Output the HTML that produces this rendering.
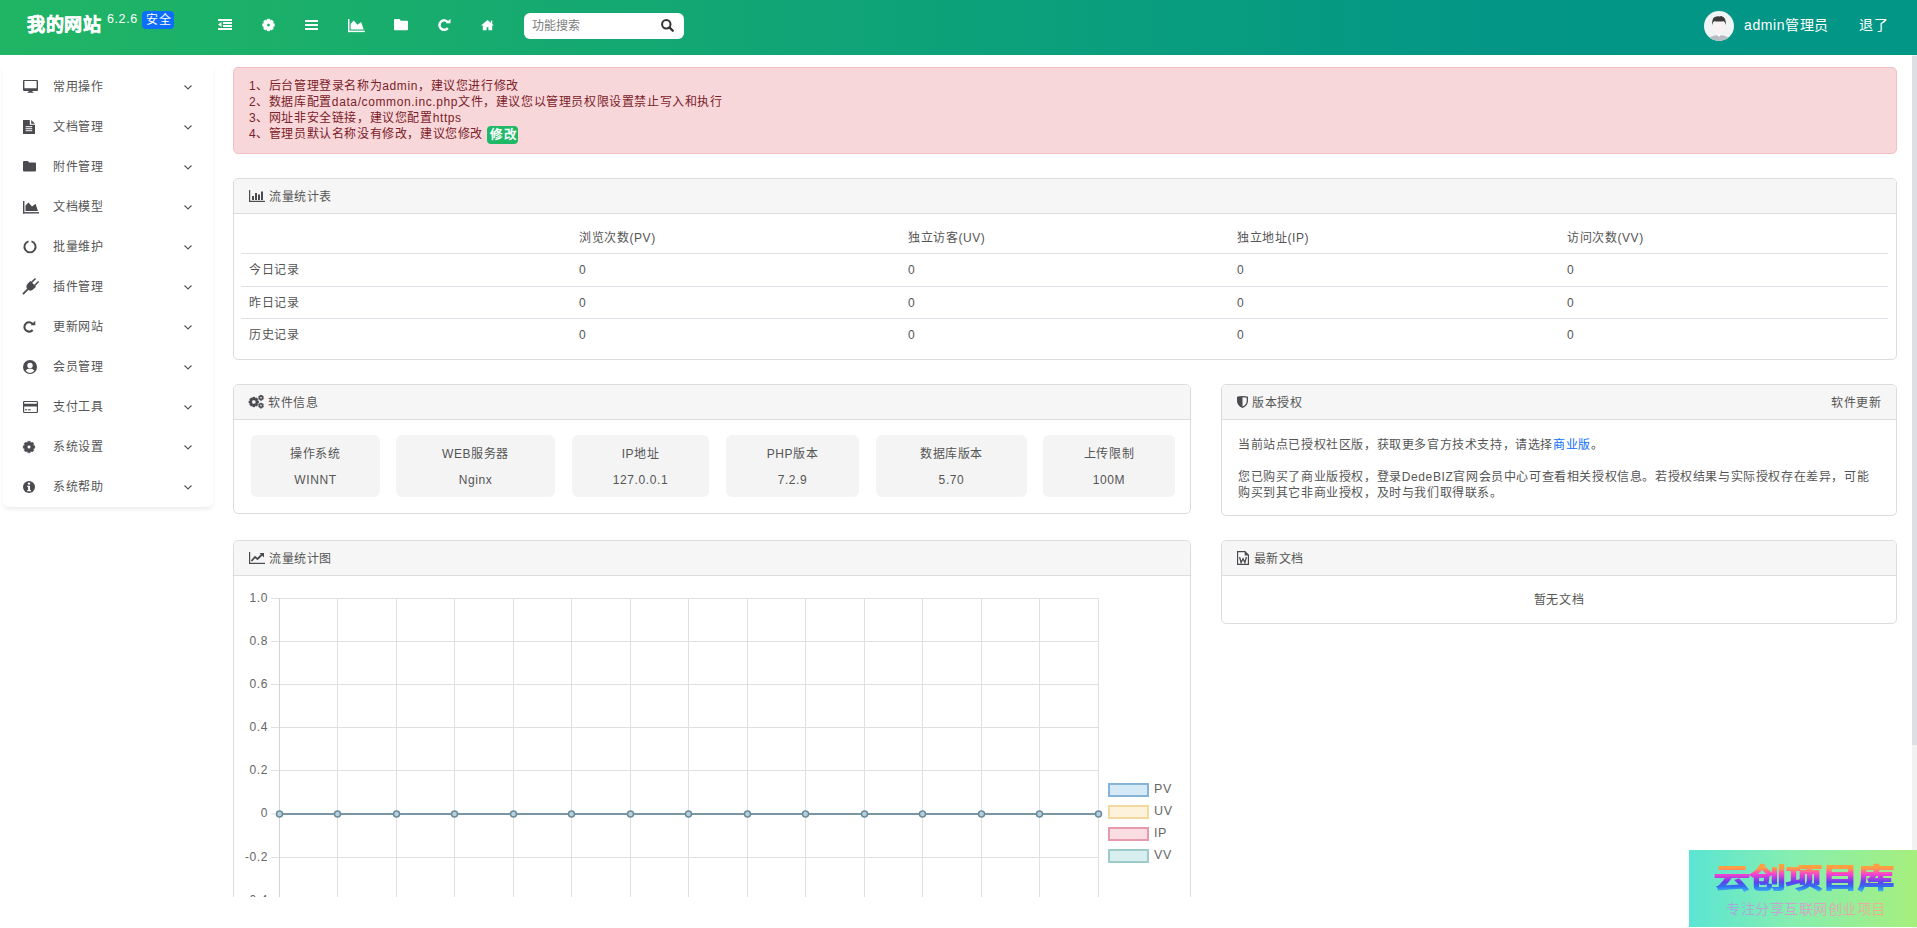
<!DOCTYPE html><html lang="zh-CN"><head><meta charset="utf-8"><title>DedeBIZ</title><style>
*{box-sizing:border-box;margin:0;padding:0}
html,body{width:1917px;height:928px;overflow:hidden;background:#fff}
body{text-autospace:no-autospace;text-spacing-trim:space-all;position:relative;font-family:"Liberation Sans",sans-serif;font-size:12px;letter-spacing:.6px;color:#555}
.abs{position:absolute}
.t{position:absolute;white-space:nowrap;line-height:16px}
.hdr{position:absolute;left:0;top:0;width:1917px;height:55px;background:linear-gradient(90deg,#20b564 0%,#039686 78%,#029686 100%)}
.card{position:absolute;border:1px solid #dcdcdc;border-radius:5px;background:#fff;overflow:hidden}
.ch{position:absolute;left:0;top:0;right:0;height:35px;background:#f6f6f6;border-bottom:1px solid #dcdcdc}
svg{position:absolute;overflow:visible}

</style></head><body>
<div class="hdr">
<div class="t" style="left:27px;top:15px;line-height:20px;font-size:18px;font-weight:900;color:#fff;letter-spacing:.5px;-webkit-text-stroke:.5px #fff">我的网站</div>
<div class="t" style="left:107px;top:12px;line-height:14px;font-size:12.5px;color:#fff">6.2.6</div>
<div class="abs" style="left:142px;top:11px;width:32px;height:18px;background:#0d6efd;border-radius:4px"></div>
<div class="t" style="left:146px;top:12px;line-height:16px;font-size:12px;color:#fff">安全</div>
<svg style="left:218px;top:19px" width="14" height="11" viewBox="0 0 14 11"><rect x="0" y="0" width="14" height="2" fill="#fff"/><rect x="5" y="3" width="9" height="2" fill="#fff"/><rect x="5" y="6" width="9" height="2" fill="#fff"/><rect x="0" y="9" width="14" height="2" fill="#fff"/><path d="M0 5.5 L3.5 3 L3.5 8 Z" fill="#fff"/></svg>
<svg style="left:0;top:0" width="1" height="1"><path d="M266.77 20.41 L267.21 18.94 L269.79 18.94 L270.23 20.41 L270.52 20.54 L271.87 19.80 L273.70 21.63 L272.96 22.98 L273.09 23.27 L274.56 23.71 L274.56 26.29 L273.09 26.73 L272.96 27.02 L273.70 28.37 L271.87 30.20 L270.52 29.46 L270.23 29.59 L269.79 31.06 L267.21 31.06 L266.77 29.59 L266.48 29.46 L265.13 30.20 L263.30 28.37 L264.04 27.02 L263.91 26.73 L262.44 26.29 L262.44 23.71 L263.91 23.27 L264.04 22.98 L263.30 21.63 L265.13 19.80 L266.48 20.54 Z M270.10 25.00 A1.6 1.6 0 1 0 266.90 25.00 A1.6 1.6 0 1 0 270.10 25.00 Z" fill="#fff" fill-rule="evenodd" stroke="#fff" stroke-width="0.3" stroke-linejoin="round" /></svg>
<svg style="left:305px;top:20px" width="13" height="10" viewBox="0 0 13 10"><rect x="0" y="0" width="13" height="2" fill="#fff"/><rect x="0" y="4" width="13" height="2" fill="#fff"/><rect x="0" y="8" width="13" height="2" fill="#fff"/></svg>
<svg style="left:347.5px;top:18.6px" width="16.8" height="13.125" viewBox="0 0 16 12.5"><rect x="0" y="0" width="1.4" height="12.5" fill="#fff"/><rect x="0" y="11.1" width="16" height="1.4" fill="#fff"/><path d="M2.5 10 L2.5 4.5 L5.5 1.5 L9 5.5 L11 4 L12.5 2.8 L15 10 Z" fill="#fff"/></svg>
<svg style="left:394px;top:19px" width="14" height="11.2" viewBox="0 0 14 11.2"><path d="M1 0 H5.5 L6.8 1.8 H13 Q14 1.8 14 2.8 V10.2 Q14 11.2 13 11.2 H1 Q0 11.2 0 10.2 V1 Q0 0 1 0 Z" fill="#fff"/></svg>
<svg style="left:437.8px;top:18.9px" width="13.0" height="13.0"><path d="M9.94 3.18 A4.75 4.75 0 1 0 9.84 9.15" fill="none" stroke="#fff" stroke-width="2.50"/><path d="M7.80 4.30 L12.50 4.30 L12.50 -0.30 Z" fill="#fff"/></svg>
<svg style="left:481px;top:19.8px" width="13" height="10.2" viewBox="0 0 13 10.2"><path d="M6.5 0 L13 5.4 H11.2 V10.2 H7.4 V7.2 H5.6 V10.2 H1.8 V5.4 H0 Z" fill="#fff"/><rect x="9.8" y="0.6" width="1.5" height="3.6" fill="#fff"/></svg>
<div class="abs" style="left:524px;top:13px;width:160px;height:26px;background:#fff;border-radius:6px"></div>
<div class="t" style="left:532px;top:17px;line-height:18px;font-size:12px;letter-spacing:0;color:#808080">功能搜索</div>
<svg style="left:660.5px;top:19px" width="13" height="13" viewBox="0 0 13 13"><circle cx="5.3" cy="5.3" r="4.2" fill="none" stroke="#333" stroke-width="2"/><path d="M8.4 8.4 L11.8 11.8" stroke="#333" stroke-width="2.3" stroke-linecap="round"/></svg>
<svg style="left:1704px;top:11px" width="30" height="30" viewBox="0 0 30 30">
<circle cx="15" cy="15" r="15" fill="#f0f4f5"/>
<clipPath id="avc"><circle cx="15" cy="15" r="15"/></clipPath>
<g clip-path="url(#avc)">
<ellipse cx="15" cy="31" rx="12" ry="7" fill="#b9bcc2"/>
<path d="M12.5 23 L15 26 L17.5 23 Z" fill="#fff"/>
<ellipse cx="15" cy="15.5" rx="6" ry="7.5" fill="#f8f2f4"/>
<path transform="translate(0,-1.6)" d="M8.2 15.8 Q7.8 8.5 11 7.6 Q13 6.4 15.5 7 Q17.5 6 18.3 7.2 Q22.2 8.5 21.8 15.8 Q21 12.5 19.8 11.8 Q15 12.6 10.2 11.8 Q9 12.5 8.2 15.8 Z" fill="#3a3a3a"/>
</g></svg>
<div class="t" style="left:1744px;top:17px;line-height:16px;font-size:14px;color:#fff">admin管理员</div>
<div class="t" style="left:1859px;top:17px;line-height:16px;font-size:14px;color:#fff">退了</div>
</div>
<div class="abs" style="left:1912px;top:55px;width:5px;height:873px;background:#f1f1f1"></div>
<div class="abs" style="left:1912px;top:56px;width:5px;height:689px;background:#dcdfe3"></div>
<div class="abs" style="left:3px;top:64px;width:210px;height:443px;background:#fff;border-radius:6px;box-shadow:0 3px 5px -1px rgba(0,0,0,.09)"></div>
<div class="t" style="left:53px;top:79px;line-height:16px;color:#555">常用操作</div>
<svg style="left:184px;top:84.5px" width="8" height="5" viewBox="0 0 8 5"><path d="M0.5 0.5 L4 4 L7.5 0.5" fill="none" stroke="#555" stroke-width="1.1"/></svg>
<div class="t" style="left:53px;top:119px;line-height:16px;color:#555">文档管理</div>
<svg style="left:184px;top:124.5px" width="8" height="5" viewBox="0 0 8 5"><path d="M0.5 0.5 L4 4 L7.5 0.5" fill="none" stroke="#555" stroke-width="1.1"/></svg>
<div class="t" style="left:53px;top:159px;line-height:16px;color:#555">附件管理</div>
<svg style="left:184px;top:164.5px" width="8" height="5" viewBox="0 0 8 5"><path d="M0.5 0.5 L4 4 L7.5 0.5" fill="none" stroke="#555" stroke-width="1.1"/></svg>
<div class="t" style="left:53px;top:199px;line-height:16px;color:#555">文档模型</div>
<svg style="left:184px;top:204.5px" width="8" height="5" viewBox="0 0 8 5"><path d="M0.5 0.5 L4 4 L7.5 0.5" fill="none" stroke="#555" stroke-width="1.1"/></svg>
<div class="t" style="left:53px;top:239px;line-height:16px;color:#555">批量维护</div>
<svg style="left:184px;top:244.5px" width="8" height="5" viewBox="0 0 8 5"><path d="M0.5 0.5 L4 4 L7.5 0.5" fill="none" stroke="#555" stroke-width="1.1"/></svg>
<div class="t" style="left:53px;top:279px;line-height:16px;color:#555">插件管理</div>
<svg style="left:184px;top:284.5px" width="8" height="5" viewBox="0 0 8 5"><path d="M0.5 0.5 L4 4 L7.5 0.5" fill="none" stroke="#555" stroke-width="1.1"/></svg>
<div class="t" style="left:53px;top:319px;line-height:16px;color:#555">更新网站</div>
<svg style="left:184px;top:324.5px" width="8" height="5" viewBox="0 0 8 5"><path d="M0.5 0.5 L4 4 L7.5 0.5" fill="none" stroke="#555" stroke-width="1.1"/></svg>
<div class="t" style="left:53px;top:359px;line-height:16px;color:#555">会员管理</div>
<svg style="left:184px;top:364.5px" width="8" height="5" viewBox="0 0 8 5"><path d="M0.5 0.5 L4 4 L7.5 0.5" fill="none" stroke="#555" stroke-width="1.1"/></svg>
<div class="t" style="left:53px;top:399px;line-height:16px;color:#555">支付工具</div>
<svg style="left:184px;top:404.5px" width="8" height="5" viewBox="0 0 8 5"><path d="M0.5 0.5 L4 4 L7.5 0.5" fill="none" stroke="#555" stroke-width="1.1"/></svg>
<div class="t" style="left:53px;top:439px;line-height:16px;color:#555">系统设置</div>
<svg style="left:184px;top:444.5px" width="8" height="5" viewBox="0 0 8 5"><path d="M0.5 0.5 L4 4 L7.5 0.5" fill="none" stroke="#555" stroke-width="1.1"/></svg>
<div class="t" style="left:53px;top:479px;line-height:16px;color:#555">系统帮助</div>
<svg style="left:184px;top:484.5px" width="8" height="5" viewBox="0 0 8 5"><path d="M0.5 0.5 L4 4 L7.5 0.5" fill="none" stroke="#555" stroke-width="1.1"/></svg>
<svg style="left:23px;top:80px" width="15" height="13" viewBox="0 0 15 13"><path d="M1 0 H14 Q15 0 15 1 V10 Q15 11 14 11 H9.5 V12 H10.5 V12.8 H4.5 V12 H5.5 V11 H1 Q0 11 0 10 V1 Q0 0 1 0 Z M1.4 1 V8.2 H13.6 V1 Z" fill="#4a4a4f" fill-rule="evenodd"/></svg>
<svg style="left:23px;top:120px" width="12" height="14" viewBox="0 0 12 14"><path d="M0 0 H6.8 V4.8 H12 V14 H0 Z M8.2 0 L12 3.8 H8.2 Z" fill="#4a4a4f"/><rect x="2.6" y="6.2" width="6.6" height="1" fill="#fff"/><rect x="2.6" y="8.2" width="6.6" height="1" fill="#fff"/><rect x="2.6" y="10.2" width="6.6" height="1" fill="#fff"/></svg>
<svg style="left:23px;top:161px" width="13" height="10.5" viewBox="0 0 13 10.5"><path d="M1 0 H5 L6 1.6 H12 Q13 1.6 13 2.6 V9.5 Q13 10.5 12 10.5 H1 Q0 10.5 0 9.5 V1 Q0 0 1 0 Z" fill="#4a4a4f"/></svg>
<svg style="left:23px;top:201px" width="16.0" height="12.5" viewBox="0 0 16 12.5"><rect x="0" y="0" width="1.4" height="12.5" fill="#4a4a4f"/><rect x="0" y="11.1" width="16" height="1.4" fill="#4a4a4f"/><path d="M2.5 10 L2.5 4.5 L5.5 1.5 L9 5.5 L11 4 L12.5 2.8 L15 10 Z" fill="#4a4a4f"/></svg>
<svg style="left:23px;top:240px" width="14" height="14" viewBox="0 0 14 14"><path d="M5.5 1.4 A5.6 5.6 0 1 0 8.5 1.4" fill="none" stroke="#4a4a4f" stroke-width="1.9"/></svg>
<svg style="left:0;top:0" width="1" height="1"><g transform="translate(30,287) rotate(45)"><rect x="-2.9" y="-10" width="1.5" height="6" fill="#4a4a4f"/><rect x="1.4" y="-10" width="1.5" height="6" fill="#4a4a4f"/><path d="M-4 -4.5 H4 V-1 Q4 3 0 3.5 Q-4 3 -4 -1 Z" fill="#4a4a4f"/><rect x="-0.9" y="3" width="1.8" height="7" fill="#4a4a4f"/></g></svg>
<svg style="left:22.9px;top:320.8px" width="12.74" height="12.74"><path d="M9.74 3.11 A4.66 4.66 0 1 0 9.64 8.97" fill="none" stroke="#4a4a4f" stroke-width="2.06"/><path d="M7.64 4.21 L12.25 4.21 L12.25 -0.29 Z" fill="#4a4a4f"/></svg>
<svg style="left:23px;top:360px" width="14" height="14" viewBox="0 0 14 14"><circle cx="7" cy="7" r="7" fill="#4a4a4f"/><circle cx="7" cy="5.4" r="2.7" fill="#fff"/><path d="M2.6 10.6 Q4.5 8.6 7 8.6 Q9.5 8.6 11.4 10.6 A5.3 5.3 0 0 1 2.6 10.6 Z" fill="#fff"/></svg>
<svg style="left:23px;top:401px" width="15" height="12" viewBox="0 0 15 12"><path d="M1.2 0 H13.8 Q15 0 15 1.2 V10.8 Q15 12 13.8 12 H1.2 Q0 12 0 10.8 V1.2 Q0 0 1.2 0 Z M1.2 1.1 V2.8 H13.8 V1.1 Z M1.2 5.5 V10.9 H13.8 V5.5 Z" fill="#4a4a4f" fill-rule="evenodd"/><rect x="2" y="8.3" width="2" height="1" fill="#4a4a4f"/><rect x="4.8" y="8.3" width="3" height="1" fill="#4a4a4f"/></svg>
<svg style="left:0;top:0" width="1" height="1"><path d="M27.34 442.60 L27.75 441.13 L30.25 441.13 L30.66 442.60 L30.94 442.72 L32.27 441.97 L34.03 443.73 L33.28 445.06 L33.40 445.34 L34.87 445.75 L34.87 448.25 L33.40 448.66 L33.28 448.94 L34.03 450.27 L32.27 452.03 L30.94 451.28 L30.66 451.40 L30.25 452.87 L27.75 452.87 L27.34 451.40 L27.06 451.28 L25.73 452.03 L23.97 450.27 L24.72 448.94 L24.60 448.66 L23.13 448.25 L23.13 445.75 L24.60 445.34 L24.72 445.06 L23.97 443.73 L25.73 441.97 L27.06 442.72 Z M30.70 447.00 A1.7 1.7 0 1 0 27.30 447.00 A1.7 1.7 0 1 0 30.70 447.00 Z" fill="#4a4a4f" fill-rule="evenodd" stroke="#4a4a4f" stroke-width="0.3" stroke-linejoin="round" /></svg>
<svg style="left:23px;top:481px" width="12" height="12" viewBox="0 0 12 12"><circle cx="6" cy="6" r="6" fill="#4a4a4f"/><circle cx="6" cy="2.6" r="1.2" fill="#fff"/><path d="M4.2 4.8 H7 V9 H8 V10.2 H4.2 V9 H5.1 V6 H4.2 Z" fill="#fff"/></svg>
<div class="abs" style="left:233px;top:67px;width:1664px;height:87px;background:#f8d7da;border:1px solid #f1c0c5;border-radius:5px"></div>
<div class="t" style="left:249px;top:78px;color:#7a2128">1、后台管理登录名称为admin，建议您进行修改</div>
<div class="t" style="left:249px;top:94px;color:#7a2128">2、数据库配置data/common.inc.php文件，建议您以管理员权限设置禁止写入和执行</div>
<div class="t" style="left:249px;top:110px;color:#7a2128">3、网址非安全链接，建议您配置https</div>
<div class="t" style="left:249px;top:126px;color:#7a2128">4、管理员默认名称没有修改，建议您修改</div>
<div class="abs" style="left:487px;top:126px;width:31px;height:18px;background:#1eb867;border-radius:4px"></div>
<div class="t" style="left:490px;top:127px;line-height:16px;font-size:12.5px;color:#fff;font-weight:bold">修改</div>
<div class="card" style="left:233px;top:178px;width:1664px;height:182px"><div class="ch"></div></div><svg style="left:249px;top:190px" width="16" height="12" viewBox="0 0 16 12"><rect x="0" y="0" width="1.2" height="12" fill="#4a4a4f"/><rect x="0" y="10.8" width="16" height="1.2" fill="#4a4a4f"/><rect x="3" y="6" width="2" height="4" fill="#4a4a4f"/><rect x="6" y="3" width="2" height="7" fill="#4a4a4f"/><rect x="9" y="4.5" width="2" height="5.5" fill="#4a4a4f"/><rect x="12" y="1.5" width="2" height="8.5" fill="#4a4a4f"/></svg><div class="t" style="left:269px;top:188.5px;color:#555">流量统计表</div>
<div class="t" style="left:579px;top:230px;color:#555">浏览次数(PV)</div>
<div class="t" style="left:908px;top:230px;color:#555">独立访客(UV)</div>
<div class="t" style="left:1237px;top:230px;color:#555">独立地址(IP)</div>
<div class="t" style="left:1567px;top:230px;color:#555">访问次数(VV)</div>
<div class="abs" style="left:241px;top:253px;width:1647px;height:1px;background:#dee2e6"></div>
<div class="abs" style="left:241px;top:286px;width:1647px;height:1px;background:#dee2e6"></div>
<div class="abs" style="left:241px;top:318px;width:1647px;height:1px;background:#dee2e6"></div>
<div class="t" style="left:249px;top:262.0px;color:#555">今日记录</div>
<div class="t" style="left:579px;top:262.0px;color:#555">0</div>
<div class="t" style="left:908px;top:262.0px;color:#555">0</div>
<div class="t" style="left:1237px;top:262.0px;color:#555">0</div>
<div class="t" style="left:1567px;top:262.0px;color:#555">0</div>
<div class="t" style="left:249px;top:294.5px;color:#555">昨日记录</div>
<div class="t" style="left:579px;top:294.5px;color:#555">0</div>
<div class="t" style="left:908px;top:294.5px;color:#555">0</div>
<div class="t" style="left:1237px;top:294.5px;color:#555">0</div>
<div class="t" style="left:1567px;top:294.5px;color:#555">0</div>
<div class="t" style="left:249px;top:327.0px;color:#555">历史记录</div>
<div class="t" style="left:579px;top:327.0px;color:#555">0</div>
<div class="t" style="left:908px;top:327.0px;color:#555">0</div>
<div class="t" style="left:1237px;top:327.0px;color:#555">0</div>
<div class="t" style="left:1567px;top:327.0px;color:#555">0</div>
<div class="card" style="left:233px;top:384px;width:958px;height:130px"><div class="ch"></div></div><svg style="left:0;top:0" width="1" height="1"><path d="M252.39 398.26 L252.74 397.01 L254.86 397.01 L255.21 398.26 L255.45 398.36 L256.58 397.72 L258.08 399.22 L257.44 400.35 L257.54 400.59 L258.79 400.94 L258.79 403.06 L257.54 403.41 L257.44 403.65 L258.08 404.78 L256.58 406.28 L255.45 405.64 L255.21 405.74 L254.86 406.99 L252.74 406.99 L252.39 405.74 L252.15 405.64 L251.02 406.28 L249.52 404.78 L250.16 403.65 L250.06 403.41 L248.81 403.06 L248.81 400.94 L250.06 400.59 L250.16 400.35 L249.52 399.22 L251.02 397.72 L252.15 398.36 Z M255.80 402.00 A2.0 2.0 0 1 0 251.80 402.00 A2.0 2.0 0 1 0 255.80 402.00 Z" fill="#4a4a4f" fill-rule="evenodd" stroke="#4a4a4f" stroke-width="0.3" stroke-linejoin="round" /><path d="M260.03 395.94 L260.23 395.11 L261.77 395.11 L261.97 395.94 L262.13 396.03 L262.94 395.78 L263.72 397.12 L263.10 397.71 L263.10 397.89 L263.72 398.48 L262.94 399.82 L262.13 399.57 L261.97 399.66 L261.77 400.49 L260.23 400.49 L260.03 399.66 L259.87 399.57 L259.06 399.82 L258.28 398.48 L258.90 397.89 L258.90 397.71 L258.28 397.12 L259.06 395.78 L259.87 396.03 Z M262.00 397.80 A1.0 1.0 0 1 0 260.00 397.80 A1.0 1.0 0 1 0 262.00 397.80 Z" fill="#4a4a4f" fill-rule="evenodd" stroke="#4a4a4f" stroke-width="0.3" stroke-linejoin="round" /><path d="M260.03 403.74 L260.23 402.91 L261.77 402.91 L261.97 403.74 L262.13 403.83 L262.94 403.58 L263.72 404.92 L263.10 405.51 L263.10 405.69 L263.72 406.28 L262.94 407.62 L262.13 407.37 L261.97 407.46 L261.77 408.29 L260.23 408.29 L260.03 407.46 L259.87 407.37 L259.06 407.62 L258.28 406.28 L258.90 405.69 L258.90 405.51 L258.28 404.92 L259.06 403.58 L259.87 403.83 Z M262.00 405.60 A1.0 1.0 0 1 0 260.00 405.60 A1.0 1.0 0 1 0 262.00 405.60 Z" fill="#4a4a4f" fill-rule="evenodd" stroke="#4a4a4f" stroke-width="0.3" stroke-linejoin="round" /></svg><div class="t" style="left:268.1px;top:394.5px;color:#555">软件信息</div>
<div class="abs" style="left:251px;top:435px;width:129px;height:62px;background:#f4f4f4;border-radius:6px"></div>
<div class="t" style="left:251px;width:129px;text-align:center;top:446px;color:#555">操作系统</div>
<div class="t" style="left:251px;width:129px;text-align:center;top:472px;color:#555;letter-spacing:0.6px">WINNT</div>
<div class="abs" style="left:396px;top:435px;width:159px;height:62px;background:#f4f4f4;border-radius:6px"></div>
<div class="t" style="left:396px;width:159px;text-align:center;top:446px;color:#555">WEB服务器</div>
<div class="t" style="left:396px;width:159px;text-align:center;top:472px;color:#555;letter-spacing:0.6px">Nginx</div>
<div class="abs" style="left:572px;top:435px;width:137px;height:62px;background:#f4f4f4;border-radius:6px"></div>
<div class="t" style="left:572px;width:137px;text-align:center;top:446px;color:#555">IP地址</div>
<div class="t" style="left:572px;width:137px;text-align:center;top:472px;color:#555;letter-spacing:0.6px">127.0.0.1</div>
<div class="abs" style="left:726px;top:435px;width:133px;height:62px;background:#f4f4f4;border-radius:6px"></div>
<div class="t" style="left:726px;width:133px;text-align:center;top:446px;color:#555">PHP版本</div>
<div class="t" style="left:726px;width:133px;text-align:center;top:472px;color:#555;letter-spacing:0.6px">7.2.9</div>
<div class="abs" style="left:876px;top:435px;width:151px;height:62px;background:#f4f4f4;border-radius:6px"></div>
<div class="t" style="left:876px;width:151px;text-align:center;top:446px;color:#555">数据库版本</div>
<div class="t" style="left:876px;width:151px;text-align:center;top:472px;color:#555;letter-spacing:0.6px">5.70</div>
<div class="abs" style="left:1043px;top:435px;width:132px;height:62px;background:#f4f4f4;border-radius:6px"></div>
<div class="t" style="left:1043px;width:132px;text-align:center;top:446px;color:#555">上传限制</div>
<div class="t" style="left:1043px;width:132px;text-align:center;top:472px;color:#555;letter-spacing:0.6px">100M</div>
<div class="card" style="left:1221px;top:384px;width:676px;height:132px"><div class="ch"></div></div><svg style="left:1237px;top:396px" width="11" height="12" viewBox="0 0 11 12"><path d="M0 0.8 Q2.5 0 5.5 0 Q8.5 0 11 0.8 V5 Q11 9.5 5.5 12 Q0 9.5 0 5 Z" fill="#4a4a4f"/><path d="M5.5 1.3 Q8 1.3 9.7 1.8 V5 Q9.7 8.7 5.5 10.6 Z" fill="#f6f6f6"/></svg><div class="t" style="left:1252px;top:394.5px;color:#555">版本授权</div><div class="t" style="left:1831px;top:394.5px;color:#555">软件更新</div>
<div class="t" style="left:1238px;top:436.5px;color:#555">当前站点已授权社区版，获取更多官方技术支持，请选择<span style="color:#0d6efd">商业版</span>。</div>
<div class="t" style="left:1238px;top:468.5px;color:#555">您已购买了商业版授权，登录DedeBIZ官网会员中心可查看相关授权信息。若授权结果与实际授权存在差异，可能</div>
<div class="t" style="left:1238px;top:484.5px;color:#555">购买到其它非商业授权，及时与我们取得联系。</div>
<div class="card" style="left:233px;top:540px;width:958px;height:400px"><div class="ch"></div></div><svg style="left:249px;top:552px" width="16" height="12" viewBox="0 0 16 12"><rect x="0" y="0" width="1.2" height="12" fill="#4a4a4f"/><rect x="0" y="10.8" width="16" height="1.2" fill="#4a4a4f"/><path d="M2.5 9 L6 5 L8.5 7 L13 2.5" fill="none" stroke="#4a4a4f" stroke-width="1.8"/><path d="M10.5 1 L15 1 L15 5.5 Z" fill="#4a4a4f"/></svg><div class="t" style="left:269px;top:550.5px;color:#555">流量统计图</div>
<svg style="left:0;top:0" width="1917" height="928"><line x1="271" y1="598.5" x2="1099" y2="598.5" stroke="#e0e0e0" stroke-width="1"/><line x1="271" y1="641.5" x2="1099" y2="641.5" stroke="#e0e0e0" stroke-width="1"/><line x1="271" y1="684.5" x2="1099" y2="684.5" stroke="#e0e0e0" stroke-width="1"/><line x1="271" y1="727.5" x2="1099" y2="727.5" stroke="#e0e0e0" stroke-width="1"/><line x1="271" y1="770.5" x2="1099" y2="770.5" stroke="#e0e0e0" stroke-width="1"/><line x1="271" y1="814.0" x2="1099" y2="814.0" stroke="#e0e0e0" stroke-width="1"/><line x1="271" y1="857.5" x2="1099" y2="857.5" stroke="#e0e0e0" stroke-width="1"/><line x1="271" y1="900.5" x2="1099" y2="900.5" stroke="#e0e0e0" stroke-width="1"/><line x1="279.5" y1="598" x2="279.5" y2="905" stroke="#d4d4d4" stroke-width="1"/><line x1="337.5" y1="598" x2="337.5" y2="905" stroke="#e0e0e0" stroke-width="1"/><line x1="396.5" y1="598" x2="396.5" y2="905" stroke="#e0e0e0" stroke-width="1"/><line x1="454.5" y1="598" x2="454.5" y2="905" stroke="#e0e0e0" stroke-width="1"/><line x1="513.5" y1="598" x2="513.5" y2="905" stroke="#e0e0e0" stroke-width="1"/><line x1="571.5" y1="598" x2="571.5" y2="905" stroke="#e0e0e0" stroke-width="1"/><line x1="630.5" y1="598" x2="630.5" y2="905" stroke="#e0e0e0" stroke-width="1"/><line x1="688.5" y1="598" x2="688.5" y2="905" stroke="#e0e0e0" stroke-width="1"/><line x1="747.5" y1="598" x2="747.5" y2="905" stroke="#e0e0e0" stroke-width="1"/><line x1="805.5" y1="598" x2="805.5" y2="905" stroke="#e0e0e0" stroke-width="1"/><line x1="864.5" y1="598" x2="864.5" y2="905" stroke="#e0e0e0" stroke-width="1"/><line x1="922.5" y1="598" x2="922.5" y2="905" stroke="#e0e0e0" stroke-width="1"/><line x1="981.5" y1="598" x2="981.5" y2="905" stroke="#e0e0e0" stroke-width="1"/><line x1="1039.5" y1="598" x2="1039.5" y2="905" stroke="#e0e0e0" stroke-width="1"/><line x1="1098.5" y1="598" x2="1098.5" y2="905" stroke="#e0e0e0" stroke-width="1"/><line x1="279" y1="814" x2="1098" y2="814" stroke="#7896a6" stroke-width="2.2"/><circle cx="279.5" cy="814" r="3" fill="#b9cfdc" stroke="#6a8c9d" stroke-width="1.5"/><circle cx="337.5" cy="814" r="3" fill="#b9cfdc" stroke="#6a8c9d" stroke-width="1.5"/><circle cx="396.5" cy="814" r="3" fill="#b9cfdc" stroke="#6a8c9d" stroke-width="1.5"/><circle cx="454.5" cy="814" r="3" fill="#b9cfdc" stroke="#6a8c9d" stroke-width="1.5"/><circle cx="513.5" cy="814" r="3" fill="#b9cfdc" stroke="#6a8c9d" stroke-width="1.5"/><circle cx="571.5" cy="814" r="3" fill="#b9cfdc" stroke="#6a8c9d" stroke-width="1.5"/><circle cx="630.5" cy="814" r="3" fill="#b9cfdc" stroke="#6a8c9d" stroke-width="1.5"/><circle cx="688.5" cy="814" r="3" fill="#b9cfdc" stroke="#6a8c9d" stroke-width="1.5"/><circle cx="747.5" cy="814" r="3" fill="#b9cfdc" stroke="#6a8c9d" stroke-width="1.5"/><circle cx="805.5" cy="814" r="3" fill="#b9cfdc" stroke="#6a8c9d" stroke-width="1.5"/><circle cx="864.5" cy="814" r="3" fill="#b9cfdc" stroke="#6a8c9d" stroke-width="1.5"/><circle cx="922.5" cy="814" r="3" fill="#b9cfdc" stroke="#6a8c9d" stroke-width="1.5"/><circle cx="981.5" cy="814" r="3" fill="#b9cfdc" stroke="#6a8c9d" stroke-width="1.5"/><circle cx="1039.5" cy="814" r="3" fill="#b9cfdc" stroke="#6a8c9d" stroke-width="1.5"/><circle cx="1098.5" cy="814" r="3" fill="#b9cfdc" stroke="#6a8c9d" stroke-width="1.5"/></svg>
<div class="t" style="left:230px;width:38px;text-align:right;top:589.5px;font-size:12px;color:#666">1.0</div>
<div class="t" style="left:230px;width:38px;text-align:right;top:632.5px;font-size:12px;color:#666">0.8</div>
<div class="t" style="left:230px;width:38px;text-align:right;top:675.5px;font-size:12px;color:#666">0.6</div>
<div class="t" style="left:230px;width:38px;text-align:right;top:718.5px;font-size:12px;color:#666">0.4</div>
<div class="t" style="left:230px;width:38px;text-align:right;top:761.5px;font-size:12px;color:#666">0.2</div>
<div class="t" style="left:230px;width:38px;text-align:right;top:805.0px;font-size:12px;color:#666">0</div>
<div class="t" style="left:230px;width:38px;text-align:right;top:848.5px;font-size:12px;color:#666">-0.2</div>
<div class="t" style="left:230px;width:38px;text-align:right;top:891.5px;font-size:12px;color:#666">-0.4</div>
<div class="abs" style="left:1108px;top:783px;width:41px;height:13.5px;background:#d6e9f7;border:2px solid #86b3d8"></div>
<div class="t" style="left:1154px;top:781px;font-size:12.5px;color:#666">PV</div>
<div class="abs" style="left:1108px;top:805px;width:41px;height:13.5px;background:#fdf2dc;border:2px solid #f3d9a0"></div>
<div class="t" style="left:1154px;top:803px;font-size:12.5px;color:#666">UV</div>
<div class="abs" style="left:1108px;top:827px;width:41px;height:13.5px;background:#fadce3;border:2px solid #e69aab"></div>
<div class="t" style="left:1154px;top:825px;font-size:12.5px;color:#666">IP</div>
<div class="abs" style="left:1108px;top:849px;width:41px;height:13.5px;background:#d8efef;border:2px solid #9dcaca"></div>
<div class="t" style="left:1154px;top:847px;font-size:12.5px;color:#666">VV</div>
<div class="abs" style="left:218px;top:897px;width:1694px;height:31px;background:#fff"></div>
<div class="card" style="left:1221px;top:540px;width:676px;height:84px"><div class="ch"></div></div><svg style="left:1237px;top:551px" width="12" height="14" viewBox="0 0 12 14"><path d="M0.6 0.6 H8 L11.4 4 V13.4 H0.6 Z" fill="#fff" stroke="#4a4a4f" stroke-width="1.2"/><path d="M7.6 0.6 V4.4 H11.4 Z" fill="#4a4a4f"/><path d="M2.6 6 L4.1 11.6 L6 7.8 L7.9 11.6 L9.4 6" fill="none" stroke="#4a4a4f" stroke-width="1.3"/></svg><div class="t" style="left:1253.5px;top:550.5px;color:#555">最新文档</div>
<div class="t" style="left:1221px;width:676px;text-align:center;top:592px;color:#555">暂无文档</div>
<div class="abs" style="left:1689px;top:850px;width:228px;height:77px;background:linear-gradient(90deg,#5ae5d3 0%,#86eeb0 45%,#a6ef7d 100%)"></div>
<div class="t" style="left:1714px;top:860px;line-height:40px;height:40px;font-size:30px;font-weight:900;letter-spacing:0;transform:scale(1.2,0.92);transform-origin:0 0;-webkit-text-stroke:1.2px transparent;background:linear-gradient(180deg,#ffa040 0%,#ffa040 22%,#ff40d0 38%,#6040f0 60%,#3070f0 72%,#40c0f0 88%);-webkit-background-clip:text;background-clip:text;color:transparent">云创项目库</div>
<div class="t" style="left:1726px;top:901px;line-height:18px;font-size:14px;letter-spacing:.5px;font-family:'Liberation Serif',serif;background:linear-gradient(90deg,#a0a8d8,#d8a0c8 50%,#f0b090);-webkit-background-clip:text;background-clip:text;color:transparent">专注分享互联网创业项目</div>
</body></html>
